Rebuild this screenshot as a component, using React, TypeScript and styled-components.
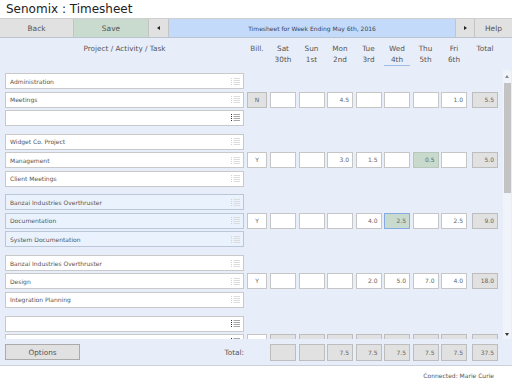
import React from "react";
import styled, { createGlobalStyle, css } from "styled-components";

const GlobalStyle = createGlobalStyle`
  html, body {
    margin: 0;
    padding: 0;
    background: #fff;
  }
  body {
    font-family: "DejaVu Sans", Verdana, sans-serif;
    color: #555;
  }
  * {
    box-sizing: border-box;
  }
`;

// task | bill | sat..thu | fri | total
const COLUMNS = "242px 23px repeat(6, 28.5px) 31px 26px";

type Tone = "plain" | "gray" | "green" | "selected";
type Direction = "up" | "down" | "left" | "right";

type Entry = {
  label: string;
  blank?: boolean;
  bill?: string;
  billTone?: Tone;
  hours?: (string | null)[];
  tones?: Record<number, Tone>;
  total?: string;
};

type Group = { highlight?: boolean; rows: Entry[] };

const empty = [null, null, null, null, null, null, null];

const groups: Group[] = [
  {
    rows: [
      { label: "Administration" },
      {
        label: "Meetings",
        bill: "N",
        billTone: "gray",
        hours: [null, null, "4.5", null, null, null, "1.0"],
        total: "5.5",
      },
      { label: "", blank: true },
    ],
  },
  {
    rows: [
      { label: "Widget Co. Project" },
      {
        label: "Management",
        bill: "Y",
        hours: [null, null, "3.0", "1.5", null, "0.5", null],
        tones: { 5: "green" },
        total: "5.0",
      },
      { label: "Client Meetings" },
    ],
  },
  {
    highlight: true,
    rows: [
      { label: "Banzai Industries Overthruster" },
      {
        label: "Documentation",
        bill: "Y",
        hours: [null, null, null, "4.0", "2.5", null, "2.5"],
        tones: { 4: "selected" },
        total: "9.0",
      },
      { label: "System Documentation" },
    ],
  },
  {
    rows: [
      { label: "Banzai Industries Overthruster" },
      {
        label: "Design",
        bill: "Y",
        hours: [null, null, null, "2.0", "5.0", "7.0", "4.0"],
        total: "18.0",
      },
      { label: "Integration Planning" },
    ],
  },
  {
    rows: [
      { label: "", blank: true },
      {
        label: "",
        blank: true,
        bill: "",
        hours: empty,
        tones: { 0: "gray", 1: "gray", 2: "gray", 3: "gray", 4: "gray", 5: "gray", 6: "gray" },
        total: "",
      },
    ],
  },
];

const days = [
  ["Sat", "30th"],
  ["Sun", "1st"],
  ["Mon", "2nd"],
  ["Tue", "3rd"],
  ["Wed", "4th"],
  ["Thu", "5th"],
  ["Fri", "6th"],
];

const dayTotals = ["", "", "7.5", "7.5", "7.5", "7.5", "7.5"];

const Page = styled.div`
  width: 512px;
  height: 384px;
  display: flex;
  flex-direction: column;
  overflow: hidden;
`;

const Title = styled.h1`
  margin: 0;
  height: 18px;
  padding-left: 6px;
  font-size: 12px;
  line-height: 18px;
  font-weight: normal;
  color: #222;
`;

const Toolbar = styled.div`
  display: grid;
  grid-template-columns: 74px 75px 20px 1fr 19px 37px;
  height: 20px;
  border-top: 1px solid #cfcfcf;
  border-bottom: 1px solid #bcc4d0;
`;

const toolTones = {
  gray: "#e1e1e1",
  green: "#c9dacf",
  blue: "#c3dafa",
};

const ToolButton = styled.div<{ $tone: keyof typeof toolTones }>`
  display: flex;
  align-items: center;
  justify-content: center;
  background: ${(p) => toolTones[p.$tone]};
  border-right: 1px solid #c4c4c4;
  font-size: 7.5px;
  color: #555;

  &:last-child {
    border-right: none;
  }
`;

const WeekTitle = styled(ToolButton)`
  font-size: 6px;
  color: #3a4456;
`;

const Arrow = styled.span<{ $dir: Direction; $color?: string }>`
  width: 0;
  height: 0;
  ${({ $dir, $color = "#222" }) => {
    switch ($dir) {
      case "up":
        return css`
          border-left: 2px solid transparent;
          border-right: 2px solid transparent;
          border-bottom: 3px solid ${$color};
        `;
      case "down":
        return css`
          border-left: 2px solid transparent;
          border-right: 2px solid transparent;
          border-top: 3px solid ${$color};
        `;
      case "left":
        return css`
          border-top: 2px solid transparent;
          border-bottom: 2px solid transparent;
          border-right: 3px solid ${$color};
        `;
      default:
        return css`
          border-top: 2px solid transparent;
          border-bottom: 2px solid transparent;
          border-left: 3px solid ${$color};
        `;
    }
  }}
`;

const Main = styled.div`
  background: #e8eef9;
  display: flex;
  flex-direction: column;
  border-bottom: 1px solid #ccd1d9;
`;

const HeaderRow = styled.div`
  display: grid;
  grid-template-columns: ${COLUMNS};
  height: 32px;
  padding: 5px 0 0 5px;
  font-size: 7.3px;
  line-height: 11px;
  color: #555;
`;

const HeadCell = styled.div<{ $w: number }>`
  width: ${(p) => p.$w}px;
  text-align: center;
`;

const HeadSub = styled.div<{ $active?: boolean }>`
  border-bottom: 1px solid ${(p) => (p.$active ? "#9dbbe6" : "transparent")};
`;

const Body = styled.div`
  display: flex;
  height: 269px;
`;

const Sheet = styled.div`
  flex: 1;
  overflow: hidden;
  padding: 3.3px 0 0 5px;
  display: flex;
  flex-direction: column;
  gap: 7.9px;
`;

const GroupBox = styled.div`
  display: flex;
  flex-direction: column;
  gap: 2.35px;
`;

const Row = styled.div`
  display: grid;
  grid-template-columns: ${COLUMNS};
  height: 16px;
  flex-shrink: 0;
`;

const TaskBox = styled.div<{ $highlight?: boolean }>`
  width: 239px;
  height: 16px;
  display: flex;
  align-items: center;
  justify-content: space-between;
  padding: 0 3px 0 4px;
  border: 1px solid ${(p) => (p.$highlight ? "#b9c7d8" : "#c9c9c9")};
  background: ${(p) => (p.$highlight ? "#eaf3fd" : "#fff")};
  font-size: 6px;
  color: #555;
`;

const cellTones: Record<Tone, { bg: string; border: string }> = {
  plain: { bg: "#fff", border: "#c6c6c6" },
  gray: { bg: "#e1e1e1", border: "#bdbdbd" },
  green: { bg: "#c7dacc", border: "#b9c6bc" },
  selected: { bg: "#c9dacf", border: "#86abe2" },
};

const Cell = styled.div<{ $tone: Tone; $tall?: boolean }>`
  width: 26px;
  height: ${(p) => (p.$tall ? 17 : 16)}px;
  padding-right: 3px;
  border: 1px solid ${(p) => cellTones[p.$tone].border};
  background: ${(p) => cellTones[p.$tone].bg};
  font-size: 6px;
  line-height: ${(p) => (p.$tall ? 15 : 14)}px;
  text-align: right;
  color: #666;
`;

const BillCell = styled(Cell)`
  width: 20px;
  padding-right: 0;
  text-align: center;
`;

const Scrollbar = styled.div`
  width: 8px;
  margin-right: 1px;
  padding: 5px 0 3px;
  display: flex;
  flex-direction: column;
  align-items: center;
  background: #f0f3f9;
`;

const Thumb = styled.div`
  width: 7px;
  height: 110px;
  margin-top: 5px;
  margin-left: 1px;
  background: #c3c3c3;
`;

const Spacer = styled.div`
  flex: 1;
`;

const Footer = styled.div`
  display: grid;
  grid-template-columns: ${COLUMNS};
  align-items: center;
  height: 26px;
  padding-left: 5px;
`;

const FooterLead = styled.div`
  width: 239px;
  display: flex;
  align-items: center;
  justify-content: space-between;
  font-size: 7.3px;
  color: #555;
`;

const OptionsButton = styled.div`
  width: 75px;
  height: 16px;
  display: flex;
  align-items: center;
  justify-content: center;
  background: #e1e1e1;
  border: 1px solid #aaa;
`;

const Status = styled.div`
  height: 18px;
  padding-right: 18px;
  display: flex;
  align-items: center;
  justify-content: flex-end;
  font-size: 6px;
  color: #555;
`;

const ListIcon = ({ dark }: { dark?: boolean }) => {
  const dot = dark ? "#333" : "#d2d2d2";
  const line = dark ? "#a8a8a8" : "#dcdcdc";
  return (
    <svg width="9" height="9" viewBox="0 0 9 9">
      {[1, 3, 5, 7].map((y) => (
        <g key={y}>
          <rect x="0" y={y} width="1" height="1" fill={dot} />
          <rect x="2.5" y={y} width="6.5" height="1" fill={line} />
        </g>
      ))}
    </svg>
  );
};

const SheetRow = ({ entry, highlight }: { entry: Entry; highlight?: boolean }) => (
  <Row>
    <TaskBox $highlight={highlight}>
      <span>{entry.label}</span>
      <ListIcon dark={entry.blank} />
    </TaskBox>
    {entry.hours && (
      <>
        <BillCell $tone={entry.billTone ?? "plain"}>{entry.bill}</BillCell>
        {entry.hours.map((h, i) => (
          <Cell key={i} $tone={entry.tones?.[i] ?? "plain"}>
            {h}
          </Cell>
        ))}
        <Cell $tone="gray">{entry.total}</Cell>
      </>
    )}
  </Row>
);

const App = () => {
  return (
    <Page>
      <GlobalStyle />
      <Title>Senomix : Timesheet</Title>
      <Toolbar>
        <ToolButton $tone="gray">Back</ToolButton>
        <ToolButton $tone="green">Save</ToolButton>
        <ToolButton $tone="gray">
          <Arrow $dir="left" />
        </ToolButton>
        <WeekTitle $tone="blue">Timesheet for Week Ending May 6th, 2016</WeekTitle>
        <ToolButton $tone="gray">
          <Arrow $dir="right" />
        </ToolButton>
        <ToolButton $tone="gray">Help</ToolButton>
      </Toolbar>

      <Main>
        <HeaderRow>
          <HeadCell $w={239}>Project / Activity / Task</HeadCell>
          <HeadCell $w={20}>Bill.</HeadCell>
          {days.map(([day, date]) => (
            <HeadCell key={day} $w={26}>
              <div>{day}</div>
              <HeadSub $active={day === "Wed"}>{date}</HeadSub>
            </HeadCell>
          ))}
          <HeadCell $w={26}>Total</HeadCell>
        </HeaderRow>

        <Body>
          <Sheet>
            {groups.map((group, gi) => (
              <GroupBox key={gi}>
                {group.rows.map((entry, ri) => (
                  <SheetRow key={ri} entry={entry} highlight={group.highlight} />
                ))}
              </GroupBox>
            ))}
          </Sheet>
          <Scrollbar>
            <Arrow $dir="up" $color="#888" />
            <Thumb />
            <Spacer />
            <Arrow $dir="down" $color="#333" />
          </Scrollbar>
        </Body>

        <Footer>
          <FooterLead>
            <OptionsButton>Options</OptionsButton>
            <span>Total:</span>
          </FooterLead>
          <div />
          {dayTotals.map((t, i) => (
            <Cell key={i} $tone="gray" $tall>
              {t}
            </Cell>
          ))}
          <Cell $tone="gray" $tall>
            37.5
          </Cell>
        </Footer>
      </Main>

      <Status>Connected: Marie Curie</Status>
    </Page>
  );
};

export default App;
